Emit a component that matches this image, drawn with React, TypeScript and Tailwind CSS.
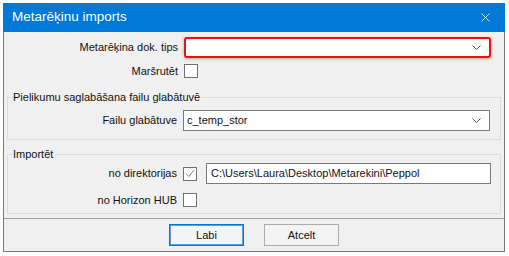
import { X } from 'lucide-react'

function Chevron() {
  return (
    <svg width="9" height="6" viewBox="0 0 9 6" className="text-[#505050]">
      <polyline points="0.5,0.5 4.5,4.5 8.5,0.5" fill="none" stroke="currentColor" strokeWidth="1" />
    </svg>
  )
}

function Checkbox({ checked = false }: { checked?: boolean }) {
  return (
    <div className="w-[14px] h-[14px] border border-[#707070] bg-white flex items-center justify-center shrink-0">
      {checked && (
        <svg width="10" height="9" viewBox="0 0 10 9">
          <polyline points="1,4.5 3.8,7.5 9,1" fill="none" stroke="#808080" strokeWidth="1" />
        </svg>
      )}
    </div>
  )
}

function Combo({ value, highlight }: { value?: string; highlight?: boolean }) {
  return (
    <div
      className={`w-[307px] h-[21px] bg-white flex items-center justify-between pl-[3px] pr-[8px] ${
        highlight
          ? 'border-2 border-[#ee1111] rounded-[3px] shadow-[0_1px_3px_rgba(120,0,0,0.35)]'
          : 'border border-[#7a7a7a]'
      }`}
    >
      <span>{value}</span>
      <Chevron />
    </div>
  )
}

function Group({ title, className, children }: { title: string; className: string; children: React.ReactNode }) {
  return (
    <div className={`relative mx-[3px] border border-[#dcdcdc] ${className}`}>
      <span className="absolute left-[5px] -top-[9px] bg-[#f0f0f0] pr-[1px] leading-[16px]">{title}</span>
      {children}
    </div>
  )
}

export default function App() {
  return (
    <div
      className="w-[509px] h-[256px] bg-white pl-[3px] pt-[3px] text-[11px] text-[#111]"
      style={{ fontFamily: '"Liberation Sans", Arial, sans-serif' }}
    >
      <div className="w-[502px] h-[249px] flex flex-col bg-[#f0f0f0]">
        <div className="h-[29px] bg-[#0078d7] flex items-center justify-between pl-[9px] pr-[12px] text-white">
          <span className="text-[13.5px]">Metarēķinu imports</span>
          <X size={15} strokeWidth={1.3} />
        </div>

        <div className="flex-1 flex flex-col border-x border-b border-[#7a7a7a]">
          <div className="flex items-center mt-[5px] h-[21px]">
            <div className="w-[174px] text-right">Metarēķina dok. tips</div>
            <div className="ml-[6px]">
              <Combo highlight />
            </div>
          </div>

          <div className="flex items-center mt-[6px] h-[14px]">
            <div className="w-[174px] text-right">Maršrutēt</div>
            <div className="ml-[6px]">
              <Checkbox />
            </div>
          </div>

          <Group title="Pielikumu saglabāšana failu glabātuvē" className="mt-[19px] h-[43px] pt-[12px]">
            <div className="flex items-center">
              <div className="w-[169px] text-right">Failu glabātuve</div>
              <div className="ml-[6px]">
                <Combo value="c_temp_stor" />
              </div>
            </div>
          </Group>

          <Group title="Importēt" className="mt-[14px] h-[60px] pt-[8px]">
            <div className="flex items-center h-[21px]">
              <div className="w-[169px] text-right">no direktorijas</div>
              <div className="ml-[6px]">
                <Checkbox checked />
              </div>
              <div className="ml-[9px] w-[285px] h-[21px] border border-[#7a7a7a] bg-white flex items-center pl-[4px]">
                C:\Users\Laura\Desktop\Metarekini\Peppol
              </div>
            </div>
            <div className="flex items-center h-[14px] mt-[9px]">
              <div className="w-[169px] text-right">no Horizon HUB</div>
              <div className="ml-[6px]">
                <Checkbox />
              </div>
            </div>
          </Group>

          <div className="mt-auto h-[33px] border-t border-[#a0a0a0] flex justify-center gap-[20px] pt-[5px]">
            <button className="w-[75px] h-[22px] bg-[#f4f4f4] border border-[#0078d7] shadow-[inset_0_0_0_1px_#5c9fdc]">
              Labi
            </button>
            <button className="w-[75px] h-[22px] bg-[#f4f4f4] border border-[#adadad]">Atcelt</button>
          </div>
        </div>
      </div>
    </div>
  )
}
